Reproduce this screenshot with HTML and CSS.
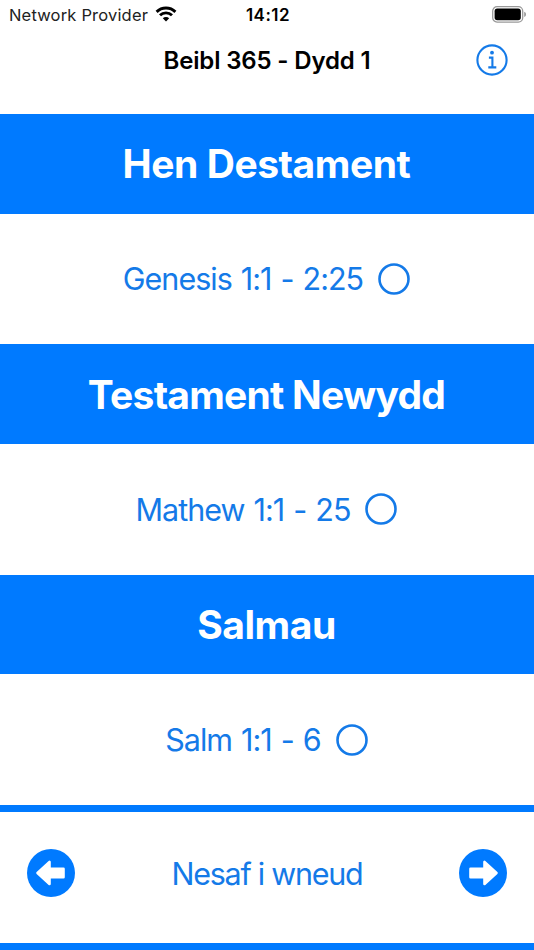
FILE: index.html
```html
<!DOCTYPE html>
<html lang="cy">
<head>
  <meta charset="UTF-8">
  <meta name="viewport" content="width=device-width, initial-scale=1.0">
  <title>Beibl 365</title>
  <link rel="stylesheet" href="styles.css">
</head>
<body>
  <div class="status">
    <div class="carrier">
      <span>Network Provider</span>
      <svg class="wifi" viewBox="0 0 22 16">
        <path d="M1.6 5.9a13.4 13.4 0 0 1 18.8 0" />
        <path d="M5 9.3a8.6 8.6 0 0 1 12 0" />
        <path class="dot" d="M11 15.6L7.8 12.3a4.6 4.6 0 0 1 6.4 0z" />
      </svg>
    </div>
    <span class="time">14:12</span>
    <svg class="battery" viewBox="0 0 35 17">
      <rect class="case" x=".7" y=".7" width="30" height="15.4" rx="4.4" />
      <rect x="2.6" y="2.6" width="26.2" height="11.6" rx="2.6" />
      <path class="tip" d="M32.2 5.8c2.4.9 2.4 4.3 0 5.2z" />
    </svg>
  </div>

  <header>
    <h1>Beibl 365 - Dydd 1</h1>
    <a class="info" href="#">
      <svg viewBox="0 0 32 32">
        <circle cx="16" cy="16" r="14.6" />
        <path d="M12.9 13.6h3.5v9.8M12.3 23.4h8" />
        <circle class="dot" cx="16" cy="8.7" r="1.9" />
      </svg>
    </a>
  </header>

  <main>
    <h2>Hen Destament</h2>
    <a class="reading" href="#">
      <span>Genesis 1:1 - 2:25</span>
      <svg class="check" viewBox="0 0 32 32"><circle cx="16" cy="16" r="14.5" /></svg>
    </a>
    <h2 class="newydd">Testament Newydd</h2>
    <a class="reading" href="#">
      <span>Mathew 1:1 - 25</span>
      <svg class="check" viewBox="0 0 32 32"><circle cx="16" cy="16" r="14.5" /></svg>
    </a>
    <h2>Salmau</h2>
    <a class="reading" href="#">
      <span>Salm 1:1 - 6</span>
      <svg class="check" viewBox="0 0 32 32"><circle cx="16" cy="16" r="14.5" /></svg>
    </a>
  </main>

  <footer>
    <a href="#">
      <svg viewBox="0 0 48 48">
        <circle cx="24" cy="24" r="24" />
        <path d="M10.5 24L22.5 13V19.8H36.5V28.2H22.5V35z" />
      </svg>
    </a>
    <a class="next" href="#">Nesaf i wneud</a>
    <a href="#">
      <svg viewBox="0 0 48 48">
        <circle cx="24" cy="24" r="24" />
        <path d="M37.5 24L25.5 13V19.8H11.5V28.2H25.5V35z" />
      </svg>
    </a>
  </footer>
</body>
</html>
```

FILE: styles.css
```css
* { box-sizing: border-box; }
body { margin: 0; font-family: Inter, "Liberation Sans", sans-serif; background: #fff; color: #000; height: 950px; display: flex; flex-direction: column; overflow: hidden; white-space: nowrap; }
a { color: #147ae8; text-decoration: none; }
svg { display: block; }
h1, h2 { margin: 0; }

.status { display: grid; grid-template-columns: 1fr auto 1fr; align-items: center; height: 29px; padding: 0 7px 0 9px; }
.carrier { display: flex; align-items: center; gap: 7px; font-size: 16.5px; letter-spacing: .18px; color: #222; }
.carrier span, .time { padding-top: 2px; }
.wifi { width: 22px; height: 16px; fill: none; stroke: #000; stroke-width: 2.9; }
.wifi .dot { fill: #000; stroke: none; }
.time { font-size: 17px; font-weight: 600; letter-spacing: .5px; }
.battery { width: 35px; height: 17px; justify-self: end; }
.battery .case { fill: none; stroke: #999; stroke-width: 1.3; }
.battery .tip { fill: #999; }

header { display: grid; grid-template-columns: 1fr auto 1fr; align-items: center; height: 85px; padding: 0 26px 23px; }
h1 { grid-column: 2; padding-top: 2px; font-size: 24px; font-weight: 600; letter-spacing: -.15px; }
.info { justify-self: end; }
.info svg { width: 32px; height: 32px; fill: none; stroke: #147ae8; stroke-width: 2.1; }
.info .dot { fill: #147ae8; stroke: none; }

h2 { height: 99.6px; line-height: 100px; padding-right: 1px; background: #007aff; color: #fff; font-size: 39px; font-weight: 700; letter-spacing: -.45px; text-align: center; }
.newydd { line-height: 101px; letter-spacing: -.75px; }
.reading { display: flex; align-items: center; justify-content: center; gap: 15px; height: 130.8px; padding-right: 1px; font-size: 30.5px; letter-spacing: -1px; word-spacing: 1.5px; }
.check { width: 32px; height: 32px; fill: none; stroke: #147ae8; stroke-width: 2.6; }

footer { display: flex; align-items: center; justify-content: space-between; height: 145px; padding: 0 27px 9px; border: solid #007aff; border-width: 7px 0; }
footer svg { width: 48px; height: 48px; fill: #007aff; }
footer path { fill: #fff; stroke: #fff; stroke-width: 2.6; stroke-linejoin: round; }
.next { font-size: 30.5px; letter-spacing: -1.25px; }
```
